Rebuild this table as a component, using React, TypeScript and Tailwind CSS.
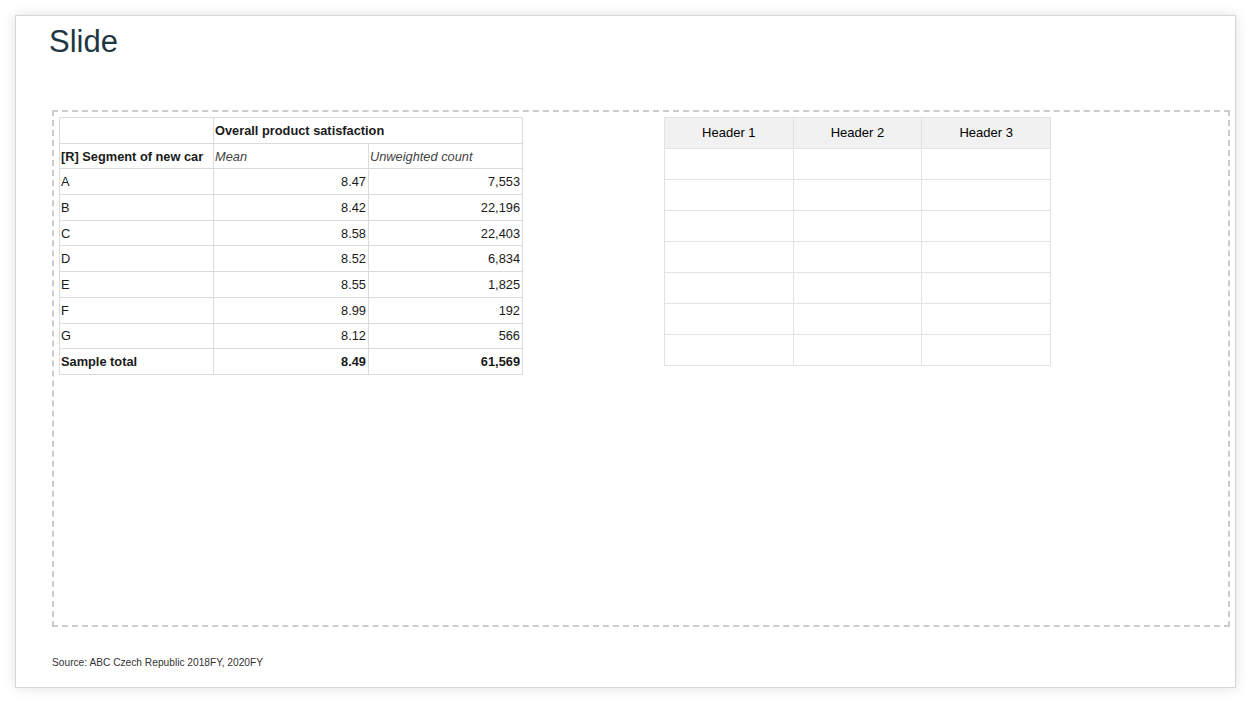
import { FC } from 'react'

const rows: [string, string, string][] = [
  ['A', '8.47', '7,553'],
  ['B', '8.42', '22,196'],
  ['C', '8.58', '22,403'],
  ['D', '8.52', '6,834'],
  ['E', '8.55', '1,825'],
  ['F', '8.99', '192'],
  ['G', '8.12', '566'],
]

const cell = 'h-[25.7px] border border-[#dcdcdc] pl-[1px] pr-[2px] pt-[2px] align-middle'

const ResultTable: FC = () => (
  <table className="w-[463px] table-fixed border-collapse text-[12.8px] leading-none text-[#1a1a1a]">
    <colgroup>
      <col className="w-[154px]" />
      <col className="w-[155px]" />
      <col className="w-[154px]" />
    </colgroup>
    <tbody>
      <tr>
        <td className={cell}></td>
        <td className={`${cell} font-bold`} colSpan={2}>
          Overall product satisfaction
        </td>
      </tr>
      <tr>
        <td className={`${cell} font-bold`}>[R] Segment of new car</td>
        <td className={`${cell} italic text-[#444]`}>Mean</td>
        <td className={`${cell} italic text-[#444]`}>Unweighted count</td>
      </tr>
      {rows.map(([label, mean, count]) => (
        <tr key={label}>
          <td className={cell}>{label}</td>
          <td className={`${cell} text-right`}>{mean}</td>
          <td className={`${cell} text-right`}>{count}</td>
        </tr>
      ))}
      <tr>
        <td className={`${cell} font-bold`}>Sample total</td>
        <td className={`${cell} text-right font-bold`}>8.49</td>
        <td className={`${cell} text-right font-bold`}>61,569</td>
      </tr>
    </tbody>
  </table>
)

const EmptyTable: FC = () => (
  <table className="w-[387px] table-fixed border-collapse text-[13px] text-black">
    <thead>
      <tr className="bg-[#f1f1f1]">
        {['Header 1', 'Header 2', 'Header 3'].map((h) => (
          <th key={h} className="h-[31px] border border-[#e2e2e2] text-center font-normal">
            {h}
          </th>
        ))}
      </tr>
    </thead>
    <tbody>
      {Array.from({ length: 7 }).map((_, i) => (
        <tr key={i}>
          <td className="h-[31px] border border-[#e2e2e2]"></td>
          <td className="h-[31px] border border-[#e2e2e2]"></td>
          <td className="h-[31px] border border-[#e2e2e2]"></td>
        </tr>
      ))}
    </tbody>
  </table>
)

const App: FC = () => {
  return (
    <div className="min-h-[703px] bg-white p-[15px] font-['Liberation_Sans',Arial,sans-serif]">
      <div className="flex h-[673px] w-[1221px] flex-col border border-[#d6d6d6] bg-white shadow-[0_0_12px_rgba(0,0,0,0.12)]">
        <h1 className="ml-[33px] mt-[9px] text-[31px] leading-[34px] text-[#1d3640]">Slide</h1>
        <div className="ml-[36px] mt-[51px] flex h-[517px] w-[1178px] items-start border-2 border-dashed border-[#cccccc] p-[5px]">
          <ResultTable />
          <div className="ml-[141px]">
            <EmptyTable />
          </div>
        </div>
        <p className="ml-[36px] mt-[28px] text-[10.2px] text-[#333]">Source: ABC Czech Republic 2018FY, 2020FY</p>
      </div>
    </div>
  )
}

export default App
